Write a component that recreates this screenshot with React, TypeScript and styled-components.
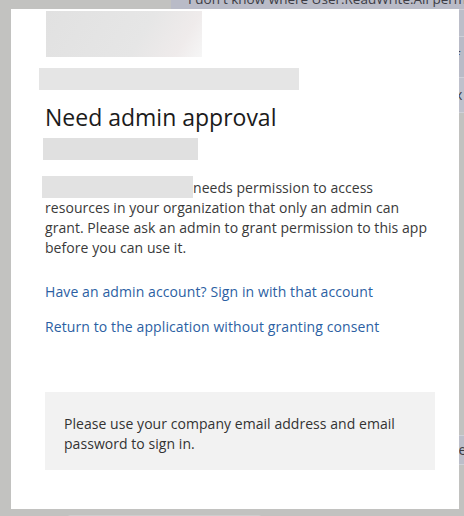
import React from "react";
import styled, { createGlobalStyle } from "styled-components";

const GlobalStyle = createGlobalStyle`
  html, body {
    margin: 0;
    padding: 0;
    background: #c2c2c0;
  }
`;

const Screen = styled.div`
  width: 464px;
  height: 516px;
  overflow: hidden;
  display: flex;
  flex-direction: column;
  background: #c2c2c0;
  font-family: "Open Sans", "Noto Sans", sans-serif;
`;

const BackTitle = styled.div`
  margin-left: 171px;
  height: 9px;
  flex: none;
  overflow: hidden;
  background: #b9bbc7;
  color: #3c3c44;
  font-size: 13.5px;
  line-height: 20px;
  white-space: nowrap;
  padding-left: 17px;

  span {
    display: block;
    margin-top: -11px;
  }
`;

const Middle = styled.div`
  display: flex;
  padding-left: 11px;
  flex: none;
`;

const Card = styled.div`
  width: 448px;
  height: 500px;
  background: #ffffff;
  display: flex;
  flex-direction: column;
  align-items: flex-start;
  padding-left: 34px;
  box-sizing: border-box;
`;

const SideStrip = styled.div`
  width: 5px;
  display: flex;
  flex-direction: column;
  overflow: hidden;
  color: #3c3c44;
  font-size: 14px;
`;

const StripPiece = styled.div<{ $h: number; $bg: string }>`
  height: ${(p) => p.$h}px;
  background: ${(p) => p.$bg};
  border-top: 1px solid #cfd0d8;
  line-height: ${(p) => p.$h}px;
  white-space: nowrap;
  text-indent: -4px;
`;

const Bottom = styled.div`
  height: 7px;
  padding-left: 68px;
  display: flex;
  align-items: flex-end;
`;

const BottomBar = styled.div`
  width: 193px;
  height: 3px;
  background: #cdcdcd;
  border-radius: 2px 2px 0 0;
`;

const Redacted = styled.div<{ $w: number; $h: number; $left: number; $top: number; $shade?: string }>`
  width: ${(p) => p.$w}px;
  height: ${(p) => p.$h}px;
  margin-left: ${(p) => p.$left}px;
  margin-top: ${(p) => p.$top}px;
  background: ${(p) => p.$shade || "#e5e5e5"};
  flex: none;
`;

const LogoBlur = styled(Redacted)`
  background: linear-gradient(120deg, #e1e1e1 0%, #e6e6e6 60%, #efebeb 85%, #f6f6f6 100%);
`;

const Heading = styled.h1`
  margin: 12px 0 0;
  font-size: 23px;
  line-height: 30px;
  font-weight: 400;
  color: #1b1b1b;
`;

const Body = styled.p`
  margin: 16px 0 0;
  width: 392px;
  font-size: 14px;
  line-height: 20px;
  letter-spacing: 0.05px;
  color: #3a3a3a;
`;

const InlineRedacted = styled.span`
  display: inline-block;
  width: 151px;
  height: 22px;
  margin-left: -3px;
  vertical-align: -5px;
  background: #e2e2e2;
`;

const Links = styled.div`
  margin-top: 24px;
  display: flex;
  flex-direction: column;
  gap: 15px;
`;

const Link = styled.a`
  font-size: 14px;
  line-height: 20px;
  letter-spacing: 0.1px;
  color: #2c5fa3;
  text-decoration: none;
  cursor: pointer;
`;

const Notice = styled.div`
  margin-top: 55px;
  width: 390px;
  box-sizing: border-box;
  padding: 22px 30px 16px 19px;
  background: #f2f2f2;
  font-size: 14px;
  line-height: 20px;
  letter-spacing: 0.05px;
  color: #333333;
`;

export default function App() {
  return (
    <>
      <GlobalStyle />
      <Screen>
        <BackTitle>
          <span>I don't know where User.ReadWrite.All permission</span>
        </BackTitle>
        <Middle>
          <Card>
            <LogoBlur $w={156} $h={46} $left={1} $top={2} />
            <Redacted $w={260} $h={22} $left={-6} $top={11} />
            <Heading>Need admin approval</Heading>
            <Redacted $w={155} $h={22} $left={-2} $top={6} $shade="#e0e0e0" />
            <Body>
              <InlineRedacted />
              needs permission to access resources in your organization that only an admin can
              grant. Please ask an admin to grant permission to this app before you can use it.
            </Body>
            <Links>
              <Link>Have an admin account? Sign in with that account</Link>
              <Link>Return to the application without granting consent</Link>
            </Links>
            <Notice>Please use your company email address and email password to sign in.</Notice>
          </Card>
          <SideStrip>
            <StripPiece $h={26} $bg="#bcbec9" />
            <StripPiece $h={40} $bg="#b9bbc7">f</StripPiece>
            <StripPiece $h={34} $bg="#bfc1cc">x</StripPiece>
            <StripPiece $h={322} $bg="#c2c2c0" />
            <StripPiece $h={28} $bg="#bcbec9">le</StripPiece>
            <StripPiece $h={50} $bg="#c2c2c0" />
          </SideStrip>
        </Middle>
        <Bottom>
          <BottomBar />
        </Bottom>
      </Screen>
    </>
  );
}
